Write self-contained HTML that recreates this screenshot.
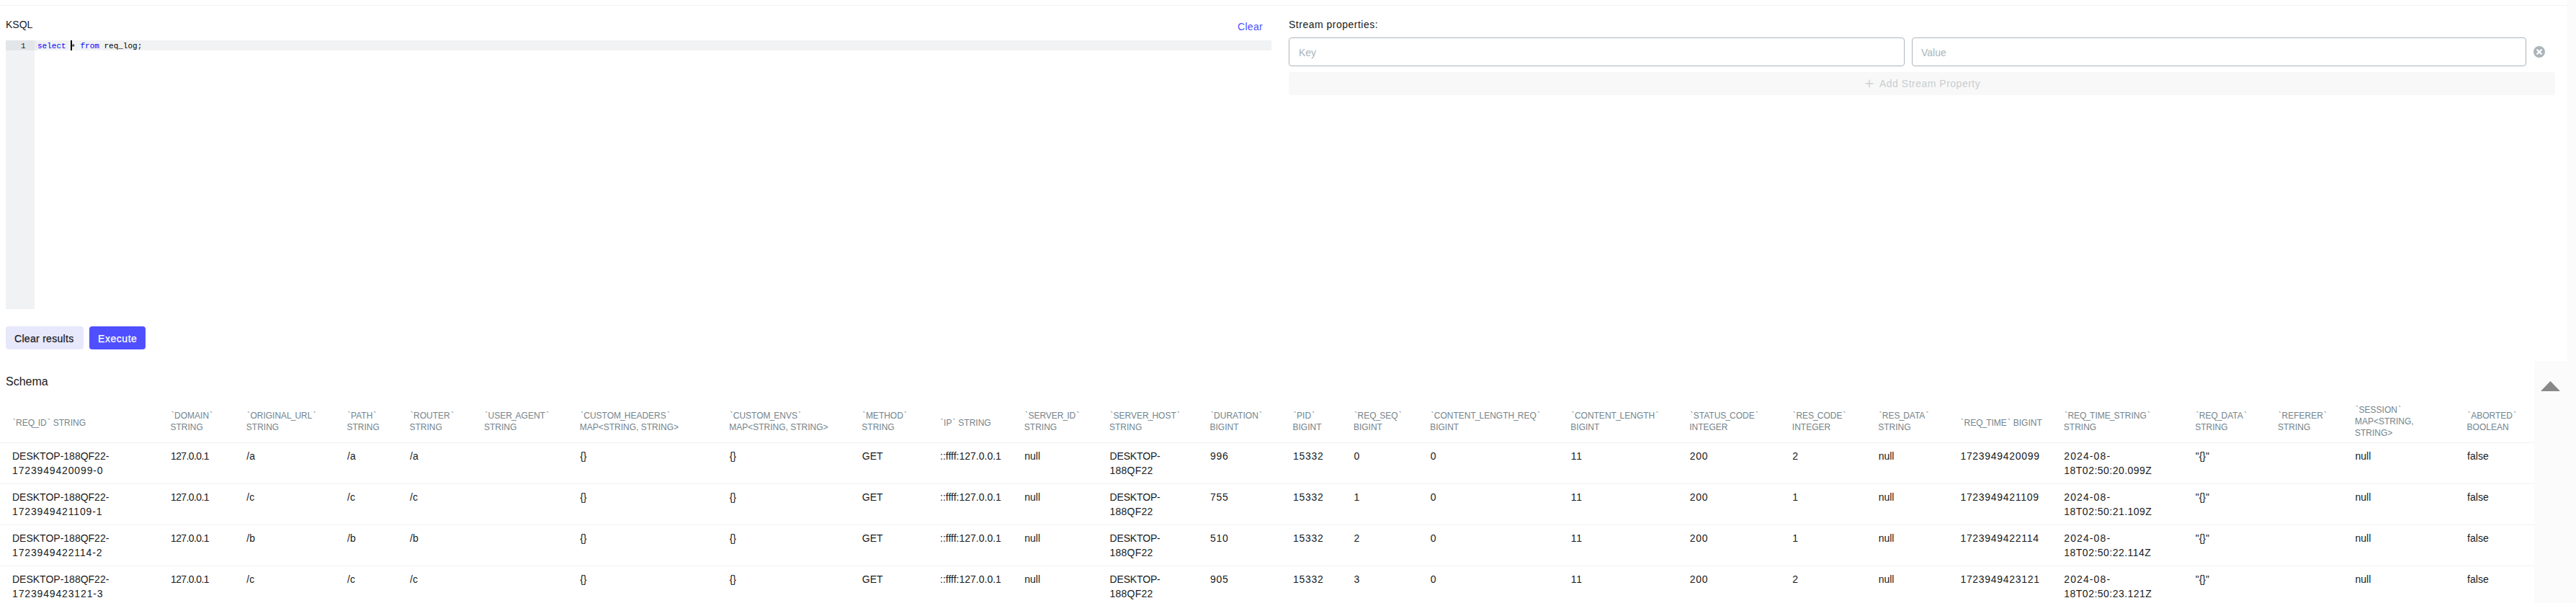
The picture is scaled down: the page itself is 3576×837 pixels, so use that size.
<!DOCTYPE html>
<html><head><meta charset="utf-8">
<style>
html,body{margin:0;padding:0;background:#fff;}
body{width:3576px;height:837px;overflow:hidden;position:relative;font-family:"Liberation Sans",sans-serif;color:#171A1C;}
.a{position:absolute;white-space:nowrap;}
.th{position:absolute;font-size:12px;line-height:16px;color:#73848C;white-space:nowrap;}
.td{position:absolute;font-size:14px;line-height:20px;color:#171A1C;white-space:nowrap;}
.bd{position:absolute;left:0;width:3518px;height:1px;background:#F1F2F3;}
.bt{margin:0 0.4px 0 1.2px}
.us{margin:0 -1px}
.mono{font-family:"Liberation Mono",monospace;}
</style></head><body>

<div class="a" style="left:0;top:7px;width:3563px;height:1px;background:#F1F2F3"></div>
<div class="a" style="left:3563px;top:0;width:13px;height:837px;background:#FBFBFB"></div>
<div class="a" style="left:3518px;top:501px;width:58px;height:336px;background:#FBFBFB"></div>
<svg class="a" style="left:3518px;top:501px" width="58" height="60"><polygon points="9,42 22.5,28 36,42" fill="#888"/></svg>
<div class="a" style="left:8px;top:24.15px;font-size:14px;line-height:20px;color:#171A1C">KSQL</div>
<div class="a" style="left:1718px;top:27.15px;font-size:14px;line-height:20px;color:#4F4FFF;letter-spacing:0.3px">Clear</div>
<div class="a" style="left:1789px;top:24.15px;font-size:14px;line-height:20px;color:#171A1C;letter-spacing:0.5px">Stream properties:</div>
<div class="a" style="left:8px;top:56px;width:1757px;height:373px;background:#fff"></div>
<div class="a" style="left:8px;top:56px;width:40px;height:373px;background:#F1F2F3"></div>
<div class="a" style="left:8px;top:56px;width:40px;height:14px;background:#E3E6E8"></div>
<div class="a" style="left:48px;top:56px;width:1717px;height:14px;background:#F1F2F3"></div>
<div class="a" style="left:48px;top:56px;width:4px;height:14px;background:#EDEDED"></div>
<div class="a mono" style="left:8px;width:27.5px;text-align:right;top:57.19px;font-size:11px;line-height:14px;color:#1a1a1a">1</div>
<div class="a mono" style="left:52px;top:57.19px;font-size:11px;line-height:14px;color:#000"><span style="color:#0000FF">select</span> <span style="position:relative;top:1.5px">*</span> <span style="color:#0000FF">from</span> req_log;</div>
<div class="a" style="left:98px;top:56px;width:2px;height:14px;background:#000"></div>
<div class="a" style="left:8px;top:453px;width:108px;height:32px;background:#E8E8FC;border-radius:4px"></div>
<div class="a" style="left:20px;top:459.95px;font-size:14px;line-height:20px;color:#171A1C;-webkit-text-stroke:0.25px #171A1C;letter-spacing:0.3px">Clear results</div>
<div class="a" style="left:124px;top:453px;width:78px;height:32px;background:#4F4FFF;border-radius:4px"></div>
<div class="a" style="left:136px;top:459.95px;font-size:14px;line-height:20px;color:#fff;-webkit-text-stroke:0.25px #fff;letter-spacing:0.55px">Execute</div>
<div class="a" style="left:8px;top:517.86px;font-size:16px;line-height:24px;color:#171A1C">Schema</div>
<div class="a" style="left:1789px;top:52px;width:853px;height:38px;border:1px solid #ABB5BA;border-radius:4px"></div>
<div class="a" style="left:1803px;top:63.15px;font-size:14px;line-height:20px;color:#ABB5BA">Key</div>
<div class="a" style="left:2654px;top:52px;width:851px;height:38px;border:1px solid #ABB5BA;border-radius:4px"></div>
<div class="a" style="left:2667px;top:63.15px;font-size:14px;line-height:20px;color:#ABB5BA">Value</div>
<svg class="a" style="left:3517px;top:64px" width="16" height="16" viewBox="0 0 16 16"><circle cx="8" cy="8" r="8" fill="#ABB5BA"/><path d="M5.2 5.2 L10.8 10.8 M10.8 5.2 L5.2 10.8" stroke="#fff" stroke-width="2.3" stroke-linecap="round"/></svg>
<div class="a" style="left:1789px;top:100px;width:1758px;height:32px;background:#F8F8F8;border-radius:4px"></div>
<svg class="a" style="left:2589px;top:110px" width="12" height="12" viewBox="0 0 12 12"><path d="M6 0.5 V11.5 M0.5 6 H11.5" stroke="#C7CED1" stroke-width="1.3"/></svg>
<div class="a" style="left:2609px;top:106.15px;font-size:14px;line-height:20px;color:#C7CED1;letter-spacing:0.5px">Add Stream Property</div>
<div class="th" style="left:16.5px;top:579.0px"><span class="bt">`</span>REQ<span class="us">_</span>ID<span class="bt">`</span> STRING</div>
<div class="th" style="left:236.5px;top:569.0px"><span class="bt">`</span>DOMAIN<span class="bt">`</span><br>STRING</div>
<div class="th" style="left:341.8px;top:569.0px"><span class="bt">`</span>ORIGINAL<span class="us">_</span>URL<span class="bt">`</span><br>STRING</div>
<div class="th" style="left:481.5px;top:569.0px"><span class="bt">`</span>PATH<span class="bt">`</span><br>STRING</div>
<div class="th" style="left:568.5px;top:569.0px"><span class="bt">`</span>ROUTER<span class="bt">`</span><br>STRING</div>
<div class="th" style="left:672.0px;top:569.0px"><span class="bt">`</span>USER<span class="us">_</span>AGENT<span class="bt">`</span><br>STRING</div>
<div class="th" style="left:804.7px;top:569.0px"><span class="bt">`</span>CUSTOM<span class="us">_</span>HEADERS<span class="bt">`</span><br>MAP&lt;STRING, STRING&gt;</div>
<div class="th" style="left:1012.2px;top:569.0px"><span class="bt">`</span>CUSTOM<span class="us">_</span>ENVS<span class="bt">`</span><br>MAP&lt;STRING, STRING&gt;</div>
<div class="th" style="left:1196.3px;top:569.0px"><span class="bt">`</span>METHOD<span class="bt">`</span><br>STRING</div>
<div class="th" style="left:1304.5px;top:579.0px"><span class="bt">`</span>IP<span class="bt">`</span> STRING</div>
<div class="th" style="left:1421.8px;top:569.0px"><span class="bt">`</span>SERVER<span class="us">_</span>ID<span class="bt">`</span><br>STRING</div>
<div class="th" style="left:1540.0px;top:569.0px"><span class="bt">`</span>SERVER<span class="us">_</span>HOST<span class="bt">`</span><br>STRING</div>
<div class="th" style="left:1679.5px;top:569.0px"><span class="bt">`</span>DURATION<span class="bt">`</span><br>BIGINT</div>
<div class="th" style="left:1794.5px;top:569.0px"><span class="bt">`</span>PID<span class="bt">`</span><br>BIGINT</div>
<div class="th" style="left:1878.9px;top:569.0px"><span class="bt">`</span>REQ<span class="us">_</span>SEQ<span class="bt">`</span><br>BIGINT</div>
<div class="th" style="left:1985.2px;top:569.0px"><span class="bt">`</span>CONTENT<span class="us">_</span>LENGTH<span class="us">_</span>REQ<span class="bt">`</span><br>BIGINT</div>
<div class="th" style="left:2180.3px;top:569.0px"><span class="bt">`</span>CONTENT<span class="us">_</span>LENGTH<span class="bt">`</span><br>BIGINT</div>
<div class="th" style="left:2345.2px;top:569.0px"><span class="bt">`</span>STATUS<span class="us">_</span>CODE<span class="bt">`</span><br>INTEGER</div>
<div class="th" style="left:2487.8px;top:569.0px"><span class="bt">`</span>RES<span class="us">_</span>CODE<span class="bt">`</span><br>INTEGER</div>
<div class="th" style="left:2607.2px;top:569.0px"><span class="bt">`</span>RES<span class="us">_</span>DATA<span class="bt">`</span><br>STRING</div>
<div class="th" style="left:2720.9px;top:579.0px"><span class="bt">`</span>REQ<span class="us">_</span>TIME<span class="bt">`</span> BIGINT</div>
<div class="th" style="left:2864.8px;top:569.0px"><span class="bt">`</span>REQ<span class="us">_</span>TIME<span class="us">_</span>STRING<span class="bt">`</span><br>STRING</div>
<div class="th" style="left:3047.2px;top:569.0px"><span class="bt">`</span>REQ<span class="us">_</span>DATA<span class="bt">`</span><br>STRING</div>
<div class="th" style="left:3161.9px;top:569.0px"><span class="bt">`</span>REFERER<span class="bt">`</span><br>STRING</div>
<div class="th" style="left:3269.0px;top:561.0px"><span class="bt">`</span>SESSION<span class="bt">`</span><br>MAP&lt;STRING,<br>STRING&gt;</div>
<div class="th" style="left:3424.6px;top:569.0px"><span class="bt">`</span>ABORTED<span class="bt">`</span><br>BOOLEAN</div>
<div class="bd" style="top:614px"></div>
<div class="bd" style="top:671px"></div>
<div class="bd" style="top:728px"></div>
<div class="bd" style="top:785px"></div>
<div class="bd" style="top:842px"></div>
<div class="td" style="left:17.0px;top:623.15px">DESKTOP-188QF22-<br><span style="letter-spacing:0.85px">1723949420099-0</span></div>
<div class="td" style="left:237.0px;top:623.15px"><span style="letter-spacing:-0.6px">127.0.0.1</span></div>
<div class="td" style="left:342.3px;top:623.15px">/a</div>
<div class="td" style="left:482.0px;top:623.15px">/a</div>
<div class="td" style="left:569.0px;top:623.15px">/a</div>
<div class="td" style="left:805.2px;top:623.15px">{}</div>
<div class="td" style="left:1012.7px;top:623.15px">{}</div>
<div class="td" style="left:1196.8px;top:623.15px">GET</div>
<div class="td" style="left:1305.0px;top:623.15px">::ffff:127.0.0.1</div>
<div class="td" style="left:1422.3px;top:623.15px">null</div>
<div class="td" style="left:1540.5px;top:623.15px"><span style="letter-spacing:-0.15px">DESKTOP-</span><br><span style="letter-spacing:0.25px">188QF22</span></div>
<div class="td" style="left:1680.0px;top:623.15px"><span style="letter-spacing:0.7px">996</span></div>
<div class="td" style="left:1795.0px;top:623.15px"><span style="letter-spacing:0.7px">15332</span></div>
<div class="td" style="left:1879.4px;top:623.15px"><span style="letter-spacing:0.7px">0</span></div>
<div class="td" style="left:1985.7px;top:623.15px"><span style="letter-spacing:0.7px">0</span></div>
<div class="td" style="left:2180.8px;top:623.15px"><span style="letter-spacing:0.7px">11</span></div>
<div class="td" style="left:2345.7px;top:623.15px"><span style="letter-spacing:0.7px">200</span></div>
<div class="td" style="left:2488.3px;top:623.15px"><span style="letter-spacing:0.7px">2</span></div>
<div class="td" style="left:2607.7px;top:623.15px">null</div>
<div class="td" style="left:2721.4px;top:623.15px"><span style="letter-spacing:0.7px">1723949420099</span></div>
<div class="td" style="left:2865.3px;top:623.15px"><span style="letter-spacing:1.1px">2024-08-</span><br><span style="letter-spacing:0.48px">18T02:50:20.099Z</span></div>
<div class="td" style="left:3047.7px;top:623.15px">"{}"</div>
<div class="td" style="left:3269.5px;top:623.15px">null</div>
<div class="td" style="left:3425.1px;top:623.15px">false</div>
<div class="td" style="left:17.0px;top:680.15px">DESKTOP-188QF22-<br><span style="letter-spacing:0.85px">1723949421109-1</span></div>
<div class="td" style="left:237.0px;top:680.15px"><span style="letter-spacing:-0.6px">127.0.0.1</span></div>
<div class="td" style="left:342.3px;top:680.15px">/c</div>
<div class="td" style="left:482.0px;top:680.15px">/c</div>
<div class="td" style="left:569.0px;top:680.15px">/c</div>
<div class="td" style="left:805.2px;top:680.15px">{}</div>
<div class="td" style="left:1012.7px;top:680.15px">{}</div>
<div class="td" style="left:1196.8px;top:680.15px">GET</div>
<div class="td" style="left:1305.0px;top:680.15px">::ffff:127.0.0.1</div>
<div class="td" style="left:1422.3px;top:680.15px">null</div>
<div class="td" style="left:1540.5px;top:680.15px"><span style="letter-spacing:-0.15px">DESKTOP-</span><br><span style="letter-spacing:0.25px">188QF22</span></div>
<div class="td" style="left:1680.0px;top:680.15px"><span style="letter-spacing:0.7px">755</span></div>
<div class="td" style="left:1795.0px;top:680.15px"><span style="letter-spacing:0.7px">15332</span></div>
<div class="td" style="left:1879.4px;top:680.15px"><span style="letter-spacing:0.7px">1</span></div>
<div class="td" style="left:1985.7px;top:680.15px"><span style="letter-spacing:0.7px">0</span></div>
<div class="td" style="left:2180.8px;top:680.15px"><span style="letter-spacing:0.7px">11</span></div>
<div class="td" style="left:2345.7px;top:680.15px"><span style="letter-spacing:0.7px">200</span></div>
<div class="td" style="left:2488.3px;top:680.15px"><span style="letter-spacing:0.7px">1</span></div>
<div class="td" style="left:2607.7px;top:680.15px">null</div>
<div class="td" style="left:2721.4px;top:680.15px"><span style="letter-spacing:0.7px">1723949421109</span></div>
<div class="td" style="left:2865.3px;top:680.15px"><span style="letter-spacing:1.1px">2024-08-</span><br><span style="letter-spacing:0.48px">18T02:50:21.109Z</span></div>
<div class="td" style="left:3047.7px;top:680.15px">"{}"</div>
<div class="td" style="left:3269.5px;top:680.15px">null</div>
<div class="td" style="left:3425.1px;top:680.15px">false</div>
<div class="td" style="left:17.0px;top:737.15px">DESKTOP-188QF22-<br><span style="letter-spacing:0.85px">1723949422114-2</span></div>
<div class="td" style="left:237.0px;top:737.15px"><span style="letter-spacing:-0.6px">127.0.0.1</span></div>
<div class="td" style="left:342.3px;top:737.15px">/b</div>
<div class="td" style="left:482.0px;top:737.15px">/b</div>
<div class="td" style="left:569.0px;top:737.15px">/b</div>
<div class="td" style="left:805.2px;top:737.15px">{}</div>
<div class="td" style="left:1012.7px;top:737.15px">{}</div>
<div class="td" style="left:1196.8px;top:737.15px">GET</div>
<div class="td" style="left:1305.0px;top:737.15px">::ffff:127.0.0.1</div>
<div class="td" style="left:1422.3px;top:737.15px">null</div>
<div class="td" style="left:1540.5px;top:737.15px"><span style="letter-spacing:-0.15px">DESKTOP-</span><br><span style="letter-spacing:0.25px">188QF22</span></div>
<div class="td" style="left:1680.0px;top:737.15px"><span style="letter-spacing:0.7px">510</span></div>
<div class="td" style="left:1795.0px;top:737.15px"><span style="letter-spacing:0.7px">15332</span></div>
<div class="td" style="left:1879.4px;top:737.15px"><span style="letter-spacing:0.7px">2</span></div>
<div class="td" style="left:1985.7px;top:737.15px"><span style="letter-spacing:0.7px">0</span></div>
<div class="td" style="left:2180.8px;top:737.15px"><span style="letter-spacing:0.7px">11</span></div>
<div class="td" style="left:2345.7px;top:737.15px"><span style="letter-spacing:0.7px">200</span></div>
<div class="td" style="left:2488.3px;top:737.15px"><span style="letter-spacing:0.7px">1</span></div>
<div class="td" style="left:2607.7px;top:737.15px">null</div>
<div class="td" style="left:2721.4px;top:737.15px"><span style="letter-spacing:0.7px">1723949422114</span></div>
<div class="td" style="left:2865.3px;top:737.15px"><span style="letter-spacing:1.1px">2024-08-</span><br><span style="letter-spacing:0.48px">18T02:50:22.114Z</span></div>
<div class="td" style="left:3047.7px;top:737.15px">"{}"</div>
<div class="td" style="left:3269.5px;top:737.15px">null</div>
<div class="td" style="left:3425.1px;top:737.15px">false</div>
<div class="td" style="left:17.0px;top:794.15px">DESKTOP-188QF22-<br><span style="letter-spacing:0.85px">1723949423121-3</span></div>
<div class="td" style="left:237.0px;top:794.15px"><span style="letter-spacing:-0.6px">127.0.0.1</span></div>
<div class="td" style="left:342.3px;top:794.15px">/c</div>
<div class="td" style="left:482.0px;top:794.15px">/c</div>
<div class="td" style="left:569.0px;top:794.15px">/c</div>
<div class="td" style="left:805.2px;top:794.15px">{}</div>
<div class="td" style="left:1012.7px;top:794.15px">{}</div>
<div class="td" style="left:1196.8px;top:794.15px">GET</div>
<div class="td" style="left:1305.0px;top:794.15px">::ffff:127.0.0.1</div>
<div class="td" style="left:1422.3px;top:794.15px">null</div>
<div class="td" style="left:1540.5px;top:794.15px"><span style="letter-spacing:-0.15px">DESKTOP-</span><br><span style="letter-spacing:0.25px">188QF22</span></div>
<div class="td" style="left:1680.0px;top:794.15px"><span style="letter-spacing:0.7px">905</span></div>
<div class="td" style="left:1795.0px;top:794.15px"><span style="letter-spacing:0.7px">15332</span></div>
<div class="td" style="left:1879.4px;top:794.15px"><span style="letter-spacing:0.7px">3</span></div>
<div class="td" style="left:1985.7px;top:794.15px"><span style="letter-spacing:0.7px">0</span></div>
<div class="td" style="left:2180.8px;top:794.15px"><span style="letter-spacing:0.7px">11</span></div>
<div class="td" style="left:2345.7px;top:794.15px"><span style="letter-spacing:0.7px">200</span></div>
<div class="td" style="left:2488.3px;top:794.15px"><span style="letter-spacing:0.7px">2</span></div>
<div class="td" style="left:2607.7px;top:794.15px">null</div>
<div class="td" style="left:2721.4px;top:794.15px"><span style="letter-spacing:0.7px">1723949423121</span></div>
<div class="td" style="left:2865.3px;top:794.15px"><span style="letter-spacing:1.1px">2024-08-</span><br><span style="letter-spacing:0.48px">18T02:50:23.121Z</span></div>
<div class="td" style="left:3047.7px;top:794.15px">"{}"</div>
<div class="td" style="left:3269.5px;top:794.15px">null</div>
<div class="td" style="left:3425.1px;top:794.15px">false</div>
</body></html>
